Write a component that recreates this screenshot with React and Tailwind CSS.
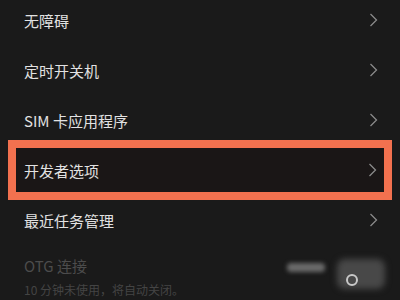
import React from "react";

const Chevron = () => (
  <svg width="9" height="14" viewBox="0 0 9 14" className="shrink-0">
    <path d="M1.5 1 L7.5 7 L1.5 13" fill="none" stroke="#8a8a8a" strokeWidth="1.3" />
  </svg>
);

const Row = ({ label }) => (
  <div className="h-[50px] flex items-center justify-between pl-6 pr-[22px]">
    <span className="text-[15px] text-[#e2e2e2] leading-none">{label}</span>
    <Chevron />
  </div>
);

export default function App() {
  return (
    <div
      className="w-[400px] h-[300px] overflow-hidden bg-[#1a1a1a] relative"
      style={{ fontFamily: '"Noto Sans CJK SC", "Noto Sans", sans-serif' }}
    >
      <div className="-mt-[5px] flex flex-col">
        <Row label="无障碍" />
        <Row label="定时开关机" />
        <Row label="SIM 卡应用程序" />
        <div className="h-[60px] -my-[5px] mx-2 border-8 border-[#f2714f] flex items-center justify-between pl-2 pr-[7px] bg-[#1a1616]">
          <span className="text-[15px] text-[#e2e2e2] leading-none">开发者选项</span>
          <Chevron />
        </div>
        <Row label="最近任务管理" />
        <div className="pl-6 pt-[13px] flex flex-col">
          <span className="text-[15px] text-[#4c4c4c] leading-none">OTG 连接</span>
          <span className="text-[12px] text-[#444444] leading-none mt-[11px]">10 分钟未使用，将自动关闭。</span>
        </div>
      </div>
      <div className="absolute left-[287px] top-[263px] w-[38px] h-[9px] rounded-sm bg-[#6a6a6a] blur-[2px]" />
      <div className="absolute left-[337px] top-[259px] w-[48px] h-[30px] rounded-lg bg-[#484848] blur-[3px]" />
      <div className="absolute left-[346px] top-[274px] w-[12px] h-[12px] rounded-full border-2 border-[#c8c8c8] blur-[0.5px]" />
    </div>
  );
}
